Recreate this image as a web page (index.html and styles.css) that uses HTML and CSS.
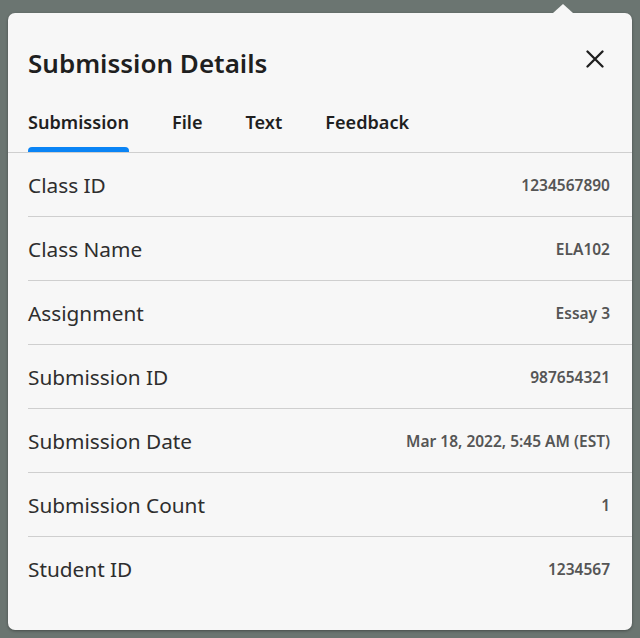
FILE: index.html
```html
<!DOCTYPE html>
<html>
<head>
<meta charset="utf-8">
<link rel="stylesheet" href="styles.css">
</head>
<body>
<div class="card">
  <span class="caret"></span>
  <div class="header">
    <h1 class="title">Submission Details</h1>
    <button class="close" aria-label="Close">
      <svg width="18" height="18" viewBox="0 0 18 18"><path d="M1.5 1.5 L16.5 16.5 M16.5 1.5 L1.5 16.5" stroke="#1f1f1f" stroke-width="2.3" stroke-linecap="round" fill="none"/></svg>
    </button>
  </div>
  <div class="tabs">
    <div class="tab active">Submission</div>
    <div class="tab">File</div>
    <div class="tab">Text</div>
    <div class="tab">Feedback</div>
  </div>
  <div class="rows">
    <div class="row"><span class="label">Class ID</span><span class="value">1234567890</span></div>
    <div class="row"><span class="label">Class Name</span><span class="value">ELA102</span></div>
    <div class="row"><span class="label">Assignment</span><span class="value">Essay 3</span></div>
    <div class="row"><span class="label">Submission ID</span><span class="value">987654321</span></div>
    <div class="row"><span class="label">Submission Date</span><span class="value">Mar 18, 2022, 5:45 AM (EST)</span></div>
    <div class="row"><span class="label">Submission Count</span><span class="value">1</span></div>
    <div class="row"><span class="label">Student ID</span><span class="value">1234567</span></div>
  </div>
</div>
</body>
</html>
```
FILE: styles.css
```css
html, body {
  margin: 0;
  padding: 0;
}
body {
  background: #6b7571;
  font-family: "Noto Sans", "Open Sans", sans-serif;
  padding: 13px 8px 8px 8px;
  height: 638px;
  box-sizing: border-box;
}
.card {
  position: relative;
  background: #f7f7f7;
  border-radius: 7px;
  height: 617px;
  box-shadow: 0 1px 3px rgba(0,0,0,0.35);
  box-sizing: border-box;
}
.caret {
  position: absolute;
  top: -9px;
  left: 545px;
  width: 0;
  height: 0;
  border-left: 10px solid transparent;
  border-right: 10px solid transparent;
  border-bottom: 9px solid #f7f7f7;
}
.header {
  display: flex;
  justify-content: space-between;
  align-items: flex-start;
  padding: 30px 28px 0 20px;
  height: 40px;
}
.title {
  margin: 0;
  font-size: 26px;
  font-weight: 600;
  color: #1f1f1f;
  line-height: 40px;
}
.close {
  background: none;
  border: 0;
  padding: 0;
  margin-top: 7px;
  width: 18px;
  height: 18px;
  display: flex;
}
.tabs {
  display: flex;
  gap: 43px;
  padding: 0 20px;
  margin-top: 24px;
  border-bottom: 1px solid #cfcfcf;
}
.tab {
  font-size: 18.1px;
  font-weight: 600;
  color: #1f1f1f;
  line-height: 24px;
  padding: 3px 0 18px;
  position: relative;
}
.tab.active::after {
  content: "";
  position: absolute;
  left: 0;
  right: 0;
  bottom: 0;
  height: 5px;
  background: #0a84f5;
  border-radius: 4px 4px 0 0;
}
.rows {
  padding-left: 20px;
}
.row {
  display: flex;
  justify-content: space-between;
  align-items: center;
  height: 63px;
  border-bottom: 1px solid #cfcfcf;
  padding-right: 22px;
}
.row:last-child {
  border-bottom: 0;
}
.label {
  font-size: 20.8px;
  color: #2e2e2e;
}
.value {
  font-size: 15.5px;
  font-weight: 600;
  color: #555;
}
```
